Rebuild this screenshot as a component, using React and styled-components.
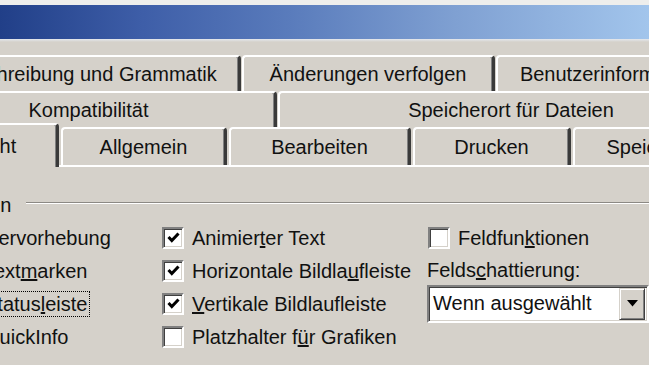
import React from "react";
import styled, { createGlobalStyle, css } from "styled-components";

const GlobalStyle = createGlobalStyle`
  html, body {
    margin: 0;
    padding: 0;
  }
  body {
    background: #d5d1ca;
    font-family: "Liberation Sans", Arial, sans-serif;
  }
`;

const Window = styled.div`
  width: 649px;
  height: 365px;
  overflow: hidden;
  background: #d5d1ca;
  color: #111;
  font-size: 20px;
`;

const FrameTop = styled.div`
  height: 5px;
  background: #eeeeec;
`;

const TitleBar = styled.div`
  height: 34px;
  background: linear-gradient(
    90deg,
    #213f88 0%,
    #3e5ea8 22%,
    #5a7cbc 45%,
    #7fa0d2 70%,
    #a2c5ec 100%
  );
`;

const TitleEdge = styled.div`
  height: 3px;
  background: linear-gradient(180deg, #e4e8ee, #d5d1ca);
`;

const TabStrip = styled.div`
  margin-top: 13px;
`;

const TabRow = styled.div`
  display: flex;
  gap: ${p => p.$gap}px;
  height: ${p => p.$height}px;
  margin-left: ${p => p.$offset}px;
`;

const selectedTab = css`
  position: relative;
  z-index: 1;
  margin-top: -4px;
  margin-bottom: -2px;
`;

const Tab = styled.div`
  box-sizing: border-box;
  flex: 0 0 ${p => p.$w}px;
  display: flex;
  align-items: center;
  justify-content: center;
  white-space: nowrap;
  background: #d5d1ca;
  border-top: 2px solid #fff;
  border-left: 2px solid #fff;
  border-right: 3px solid #3a3a3a;
  box-shadow: inset -1px 0 0 #808080;
  border-radius: 4px 4px 0 0;
  ${p => p.$selected && selectedTab};
`;

const Panel = styled.div`
  border-top: 2px solid #fff;
`;

const GroupHead = styled.div`
  display: flex;
  height: 22px;
  margin-top: 27px;
  margin-left: -72px;
  white-space: nowrap;
`;

const GroupLabel = styled.span`
  line-height: 22px;
`;

const Etch = styled.div`
  flex: 1;
  margin: 8px 0 0 15px;
  height: 0;
  border-top: 1px solid #8c8984;
  border-bottom: 1px solid #fff;
`;

const OptionGrid = styled.div`
  display: grid;
  grid-template-columns: 208px 266px 221px;
  grid-template-rows: repeat(4, 33px);
  grid-auto-flow: column;
  margin-top: 5px;
  margin-left: -46px;
`;

const Option = styled.label`
  display: flex;
  align-items: center;
  gap: 8px;
  white-space: nowrap;
`;

const Box = styled.span`
  box-sizing: border-box;
  flex: 0 0 22px;
  width: 22px;
  height: 22px;
  display: flex;
  align-items: center;
  justify-content: center;
  background: #fff;
  border: 2px solid;
  border-color: #808080 #fff #fff #808080;
  box-shadow: inset 1px 1px 0 #404040, inset -1px -1px 0 #d5d1ca;
`;

const Caption = styled.span`
  line-height: 22px;
  padding: 1px 2px;
  margin-left: -3px;
  border: 1px dotted ${p => (p.$focus ? "#000" : "transparent")};
`;

const FieldLabel = styled.div`
  display: flex;
  align-items: center;
  white-space: nowrap;
  margin-left: -1px;
`;

const Select = styled.div`
  box-sizing: border-box;
  align-self: center;
  display: flex;
  align-items: center;
  height: 38px;
  margin-left: -1px;
  background: #fff;
  border: 2px solid;
  border-color: #808080 #fff #fff #808080;
  box-shadow: inset 1px 1px 0 #404040, inset -1px -1px 0 #d5d1ca;
`;

const SelectValue = styled.span`
  flex: 1;
  padding-left: 4px;
  white-space: nowrap;
`;

const DropButton = styled.span`
  box-sizing: border-box;
  width: 26px;
  height: 32px;
  margin-right: 2px;
  display: flex;
  align-items: center;
  justify-content: center;
  background: #d5d1ca;
  border: 1px solid;
  border-color: #d5d1ca #404040 #404040 #d5d1ca;
  box-shadow: inset 1px 1px 0 #fff, inset -1px -1px 0 #808080;
`;

const Check = () => (
  <svg width="13" height="13" viewBox="0 0 13 13">
    <polyline
      points="1.5,6 4.8,9.5 11.5,2.5"
      fill="none"
      stroke="#000"
      strokeWidth="3"
    />
  </svg>
);

const Arrow = () => (
  <svg width="11" height="7" viewBox="0 0 11 7">
    <polygon points="0,0 11,0 5.5,6.5" fill="#000" />
  </svg>
);

const CheckOption = ({ checked, focus, children }) => (
  <Option>
    <Box>{checked && <Check />}</Box>
    <Caption $focus={focus}>{children}</Caption>
  </Option>
);

const rows = [
  {
    offset: -99,
    height: 36,
    gap: 1,
    tabs: [
      ["Rechtschreibung und Grammatik", 340],
      ["Änderungen verfolgen", 253],
      ["Benutzerinformationen", 250]
    ]
  },
  {
    offset: -99,
    height: 36,
    gap: 1,
    tabs: [
      ["Kompatibilität", 376],
      ["Speicherort für Dateien", 467]
    ]
  },
  {
    offset: -91,
    height: 38,
    gap: 2,
    tabs: [
      ["Ansicht", 150, true],
      ["Allgemein", 166],
      ["Bearbeiten", 182],
      ["Drucken", 158],
      ["Speichern", 158],
      ["Sicherheit", 160]
    ]
  }
];

const App = () => (
  <Window>
    <GlobalStyle />
    <FrameTop />
    <TitleBar />
    <TitleEdge />
    <TabStrip>
      {rows.map((row, i) => (
        <TabRow key={i} $offset={row.offset} $height={row.height} $gap={row.gap}>
          {row.tabs.map(([label, w, selected]) => (
            <Tab key={label} $w={w} $selected={selected}>
              {label}
            </Tab>
          ))}
        </TabRow>
      ))}
    </TabStrip>
    <Panel>
      <GroupHead>
        <GroupLabel>Anzeigen</GroupLabel>
        <Etch />
      </GroupHead>
      <OptionGrid>
        <CheckOption checked>Hervorhebung</CheckOption>
        <CheckOption checked>
          Text<u>m</u>arken
        </CheckOption>
        <CheckOption checked focus>
          Status<u>l</u>eiste
        </CheckOption>
        <CheckOption checked>
          <u>Q</u>uickInfo
        </CheckOption>

        <CheckOption checked>
          Animier<u>t</u>er Text
        </CheckOption>
        <CheckOption checked>
          Horizontale Bildla<u>u</u>fleiste
        </CheckOption>
        <CheckOption checked>
          <u>V</u>ertikale Bildlaufleiste
        </CheckOption>
        <CheckOption>
          Platzhalter f<u>ü</u>r Grafiken
        </CheckOption>

        <CheckOption>
          Feldfun<u>k</u>tionen
        </CheckOption>
        <FieldLabel>
          Felds<u>c</u>hattierung:
        </FieldLabel>
        <Select>
          <SelectValue>Wenn ausgewählt</SelectValue>
          <DropButton>
            <Arrow />
          </DropButton>
        </Select>
      </OptionGrid>
    </Panel>
  </Window>
);

export default App;
